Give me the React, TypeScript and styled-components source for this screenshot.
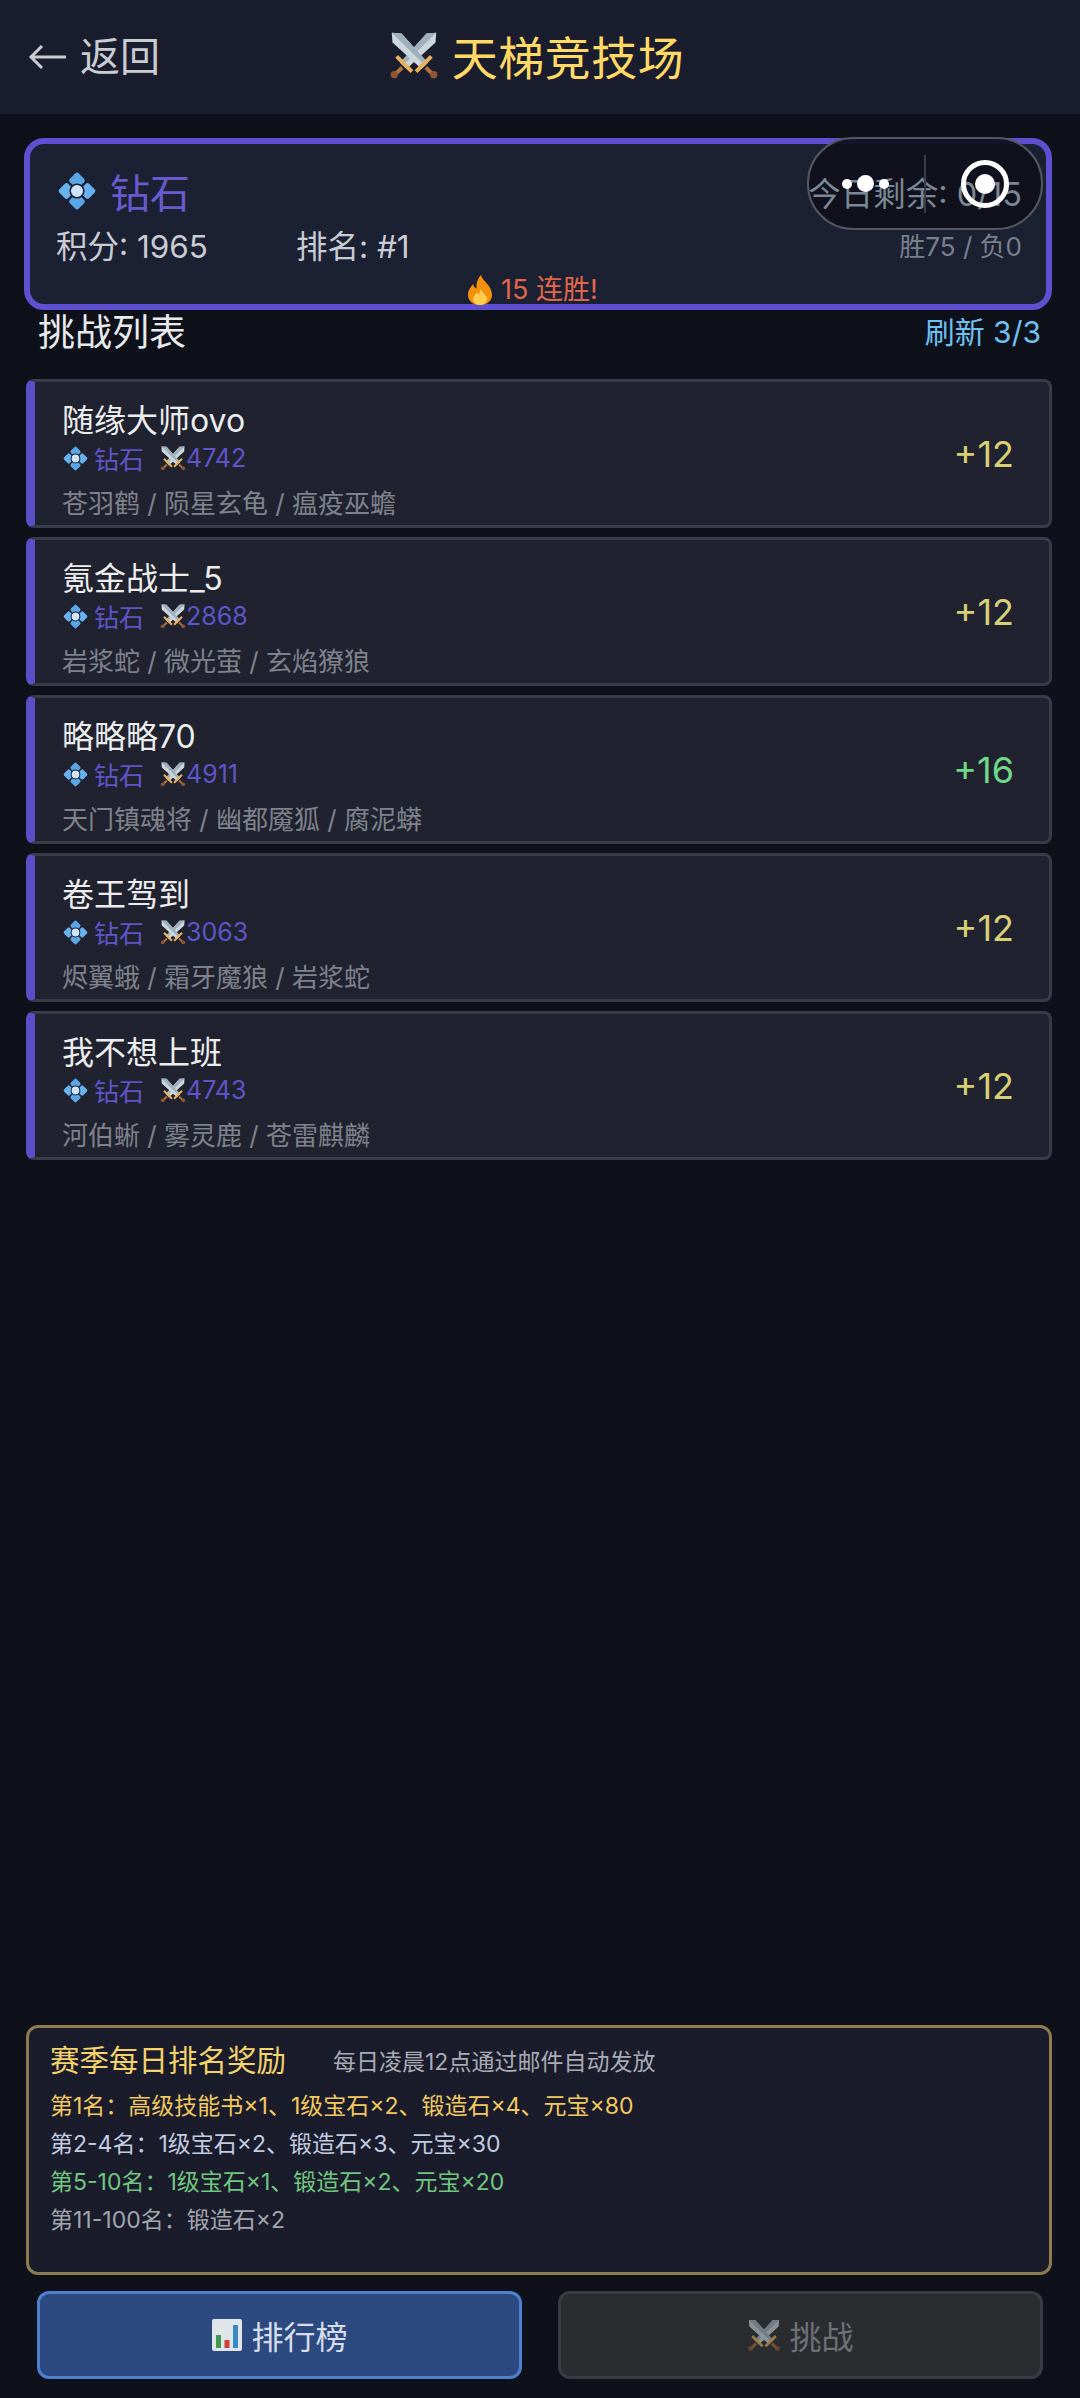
import React from "react";
import styled, { createGlobalStyle } from "styled-components";

const GlobalStyle = createGlobalStyle`
  html, body {
    margin: 0;
    padding: 0;
    background: #0f111a;
  }
  body {
    font-family: Inter, "Noto Sans CJK SC", sans-serif;
  }
`;

interface Opponent {
  name: string;
  power: number;
  pets: string;
  gain: number;
}

const opponents: Opponent[] = [
  { name: "随缘大师ovo", power: 4742, pets: "苍羽鹤 / 陨星玄龟 / 瘟疫巫蟾", gain: 12 },
  { name: "氪金战士_5", power: 2868, pets: "岩浆蛇 / 微光萤 / 玄焰獠狼", gain: 12 },
  { name: "略略略70", power: 4911, pets: "天门镇魂将 / 幽都魇狐 / 腐泥蟒", gain: 16 },
  { name: "卷王驾到", power: 3063, pets: "烬翼蛾 / 霜牙魔狼 / 岩浆蛇", gain: 12 },
  { name: "我不想上班", power: 4743, pets: "河伯蜥 / 雾灵鹿 / 苍雷麒麟", gain: 12 },
];

function Swords({ size }: { size: number }) {
  const half = (
    <>
      <path d="M34 2 L33.500 9 L12.500 28 L8 23.500 L27 2.500 Z" fill="#ccd6dd" />
      <path d="M34 2 L10 25.500 L8 23.500 L27 2.500 Z" fill="#9fb0bd" />
      <path d="M4.500 20 L6.500 18 L17.500 29 L15.500 31 Z" fill="#e8b25c" />
      <path d="M8.500 26 L10.500 28 L5.500 33 L3.500 31 Z" fill="#b0713f" />
      <circle cx="3.800" cy="32.200" r="2.600" fill="#8f5633" />
    </>
  );
  return (
    <svg width={size} height={size} viewBox="0 0 36 36">
      {half}
      <g transform="matrix(-1 0 0 1 36 0)">{half}</g>
    </svg>
  );
}

function Diamond({ size }: { size: number }) {
  return (
    <svg width={size} height={size} viewBox="0 0 40 40">
      <rect x="14" y="4" width="12" height="12" rx="2.500" transform="rotate(45 20 10)" fill="#5aa5e6" />
      <rect x="14" y="24" width="12" height="12" rx="2.500" transform="rotate(45 20 30)" fill="#5aa5e6" />
      <rect x="4" y="14" width="12" height="12" rx="2.500" transform="rotate(45 10 20)" fill="#68b2f0" />
      <rect x="24" y="14" width="12" height="12" rx="2.500" transform="rotate(45 30 20)" fill="#68b2f0" />
      <circle cx="20" cy="20" r="6.500" fill="#cfe4f7" stroke="#1c2033" strokeWidth="1.500" />
    </svg>
  );
}

function Fire() {
  return (
    <svg width="26" height="30" viewBox="0 0 26 30">
      <path
        d="M14 0 C15 6 25 10 25 20 C25 26 20 30 13 30 C6 30 1 26 1 20 C1 15 4 12 6 9 C7 12 8 13 9.500 13.500 C9 8 11 3 14 0 Z"
        fill="#f4900c"
      />
      <path
        d="M14 14 C15 18 20 20 20 24 C20 27.500 17 30 13 30 C9 30 6 27.500 6 24 C6 21 8.500 19.500 10 17.500 C11 19 12 19 12.500 19 C12.500 17 13 15.500 14 14 Z"
        fill="#ffcc4d"
      />
    </svg>
  );
}

function BarChart() {
  return (
    <svg width="32" height="32" viewBox="0 0 32 32">
      <rect x="1" y="0" width="30" height="32" rx="2" fill="#dfe5e8" />
      <rect x="5" y="16" width="5" height="13" fill="#3e9b4f" />
      <rect x="13.500" y="21" width="5" height="8" fill="#d23f3f" />
      <rect x="22" y="6" width="5" height="23" fill="#3b88c3" />
    </svg>
  );
}

export default function App() {
  return (
    <Page>
      <GlobalStyle />
      <Header>
        <BackButton>
          <svg width="38" height="26" viewBox="0 0 38 26" fill="none" stroke="#c9ccd2" strokeWidth="3">
            <path d="M38 13 H3 M14 2 L3 13 L14 24" />
          </svg>
          <span>返回</span>
        </BackButton>
        <Title>
          <Swords size={50} />
          <span>天梯竞技场</span>
        </Title>
      </Header>

      <Main>
        <RankCard>
          <RankRow>
            <RankName>
              <Diamond size={42} />
              <span>钻石</span>
            </RankName>
            <Remaining>今日剩余: 0/15</Remaining>
          </RankRow>
          <StatsRow>
            <Stats>
              <span>积分: 1965</span>
              <span>排名: #1</span>
            </Stats>
            <Record>胜75 / 负0</Record>
          </StatsRow>
          <Streak>
            <Fire />
            <span>15 连胜!</span>
          </Streak>
          <Capsule>
            <Dots>
              <Dot $size={10} />
              <Dot $size={17} />
              <Dot $size={10} />
            </Dots>
            <CapsuleDivider />
            <CapsuleTarget>
              <Dot $size={20} />
            </CapsuleTarget>
          </Capsule>
        </RankCard>

        <SectionHead>
          <SectionTitle>挑战列表</SectionTitle>
          <Refresh>刷新 3/3</Refresh>
        </SectionHead>

        <List>
          {opponents.map((o) => (
            <Row key={o.name}>
              <RowBody>
                <PlayerName>{o.name}</PlayerName>
                <PlayerMeta>
                  <Diamond size={27} />
                  <span>钻石</span>
                  <Power>
                    <Swords size={26} />
                    <span>{o.power}</span>
                  </Power>
                </PlayerMeta>
                <Pets>{o.pets}</Pets>
              </RowBody>
              <Gain $high={o.gain > 12}>+{o.gain}</Gain>
            </Row>
          ))}
        </List>
      </Main>

      <Rewards>
        <RewardsHead>
          <RewardsTitle>赛季每日排名奖励</RewardsTitle>
          <RewardsNote>每日凌晨12点通过邮件自动发放</RewardsNote>
        </RewardsHead>
        <RewardLine $color="#f3c95f">第1名：高级技能书×1、1级宝石×2、锻造石×4、元宝×80</RewardLine>
        <RewardLine $color="#c3cbe0">第2-4名：1级宝石×2、锻造石×3、元宝×30</RewardLine>
        <RewardLine $color="#71c77f">第5-10名：1级宝石×1、锻造石×2、元宝×20</RewardLine>
        <RewardLine $color="#a3a6ad">第11-100名：锻造石×2</RewardLine>
      </Rewards>

      <Footer>
        <RankButton>
          <BarChart />
          <span>排行榜</span>
        </RankButton>
        <ChallengeButton>
          <Swords size={34} />
          <span>挑战</span>
        </ChallengeButton>
      </Footer>
    </Page>
  );
}

const Page = styled.div`
  width: 1080px;
  height: 2398px;
  display: flex;
  flex-direction: column;
  overflow: hidden;
  background: #0f111a;
`;

const Header = styled.header`
  position: relative;
  height: 114px;
  flex: none;
  display: flex;
  align-items: center;
  justify-content: center;
  padding-right: 7px;
  box-sizing: border-box;
  background: #1a1d2d;
`;

const BackButton = styled.div`
  position: absolute;
  left: 28px;
  top: 33px;
  display: flex;
  align-items: center;
  gap: 14px;
  font-size: 40px;
  line-height: 48px;
  color: #c9ccd2;
`;

const Title = styled.h1`
  margin: -4px 0 0;
  display: flex;
  align-items: center;
  gap: 13px;
  font-size: 46px;
  font-weight: 400;
  letter-spacing: 0.5px;
  color: #ffd966;
`;

const Main = styled.main`
  flex: 1;
  display: flex;
  flex-direction: column;
  padding: 24px 28px 0 24px;
`;

const RankCard = styled.section`
  position: relative;
  height: 172px;
  box-sizing: border-box;
  padding: 17px 24px 0 26px;
  border: 6px solid #5e50d0;
  border-radius: 20px;
  background: #1c2033;
`;

const RankRow = styled.div`
  display: flex;
  justify-content: space-between;
  align-items: center;
  height: 60px;
`;

const RankName = styled.div`
  display: flex;
  align-items: center;
  gap: 12px;
  font-size: 40px;
  color: #6a5acd;
`;

const Remaining = styled.div`
  position: relative;
  z-index: 1;
  font-size: 32.500px;
  color: #7a8794;
`;

const StatsRow = styled.div`
  display: flex;
  justify-content: space-between;
  align-items: center;
  height: 46px;
`;

const Stats = styled.div`
  display: flex;
  gap: 88px;
  font-size: 31.500px;
  color: #c9ccd2;
`;

const Record = styled.div`
  font-size: 26px;
  color: #7a7f8c;
`;

const Streak = styled.div`
  position: absolute;
  left: 0;
  right: 11px;
  bottom: -1px;
  display: flex;
  justify-content: center;
  align-items: center;
  gap: 8px;
  font-size: 27px;
  line-height: 30px;
  color: #e2674a;
`;

const Capsule = styled.div`
  position: absolute;
  top: -7px;
  right: 3px;
  width: 236px;
  height: 93px;
  box-sizing: border-box;
  display: flex;
  align-items: center;
  border-radius: 46px;

  &::before {
    content: "";
    position: absolute;
    inset: 0;
    box-sizing: border-box;
    border: 2px solid #55565f;
    border-radius: 46px;
    background: rgba(15, 16, 26, 0.92);
  }
`;

const Dots = styled.div`
  position: relative;
  z-index: 2;
  flex: 1;
  display: flex;
  justify-content: center;
  align-items: center;
  gap: 5px;
`;

const Dot = styled.span<{ $size: number }>`
  width: ${(p) => p.$size}px;
  height: ${(p) => p.$size}px;
  border-radius: 50%;
  background: #fff;
`;

const CapsuleDivider = styled.div`
  position: relative;
  z-index: 2;
  width: 2px;
  height: 58px;
  background: #3a3c48;
`;

const CapsuleTarget = styled.div`
  position: relative;
  z-index: 2;
  flex: 1;
  display: flex;
  justify-content: center;
  align-items: center;

  &::after {
    content: "";
    position: absolute;
    left: 50%;
    top: 50%;
    width: 48px;
    height: 48px;
    box-sizing: border-box;
    transform: translate(-50%, -50%);
    border: 5px solid #fff;
    border-radius: 50%;
  }
`;

const SectionHead = styled.div`
  display: flex;
  justify-content: space-between;
  align-items: center;
  height: 40px;
  padding: 0 11px 0 14px;
  margin-bottom: 29px;
`;

const SectionTitle = styled.h2`
  margin: 0;
  font-size: 37px;
  font-weight: 400;
  color: #e8e9ec;
`;

const Refresh = styled.div`
  font-size: 30px;
  color: #6fc0f2;
`;

const List = styled.div`
  display: flex;
  flex-direction: column;
  gap: 9px;
  margin-left: 2px;
`;

const Row = styled.div`
  height: 149px;
  box-sizing: border-box;
  display: flex;
  align-items: center;
  justify-content: space-between;
  padding: 0 35px 0 27px;
  border: 3px solid #383b48;
  border-left: 9px solid #5b4fc7;
  border-radius: 8px;
  background: #20222f;
`;

const RowBody = styled.div`
  display: flex;
  flex-direction: column;
  padding-top: 14px;
`;

const PlayerName = styled.div`
  font-size: 32px;
  line-height: 42px;
  color: #eceded;
`;

const PlayerMeta = styled.div`
  display: flex;
  align-items: center;
  gap: 5px;
  height: 36px;
  margin-top: -2px;
  font-size: 25px;
  color: #5f55c9;
`;

const Power = styled.div`
  display: flex;
  align-items: center;
  margin-left: 11px;
`;

const Pets = styled.div`
  margin-top: 11px;
  font-size: 26px;
  line-height: 34px;
  color: #7f828c;
`;

const Gain = styled.div<{ $high: boolean }>`
  font-size: 36px;
  color: ${(p) => (p.$high ? "#6fd98a" : "#d8d077")};
`;

const Rewards = styled.section`
  margin: 0 28px 0 26px;
  height: 250px;
  flex: none;
  box-sizing: border-box;
  padding: 7px 21px 0;
  border: 3px solid #8c7c4f;
  border-radius: 12px;
  background: #1a1c2c;
`;

const RewardsHead = styled.div`
  display: flex;
  align-items: center;
  gap: 47px;
  height: 46px;
  margin-bottom: 6px;
`;

const RewardsTitle = styled.div`
  font-size: 29.500px;
  color: #f3d36a;
`;

const RewardsNote = styled.div`
  margin-top: 3px;
  font-size: 23px;
  color: #a9abb4;
`;

const RewardLine = styled.div<{ $color: string }>`
  font-size: 23px;
  line-height: 38px;
  color: ${(p) => p.$color};
`;

const Footer = styled.footer`
  flex: none;
  display: flex;
  justify-content: space-between;
  padding: 16px 37px 19px 37px;
`;

const ActionButton = styled.div`
  width: 485px;
  height: 88px;
  box-sizing: border-box;
  display: flex;
  justify-content: center;
  align-items: center;
  gap: 8px;
  border-radius: 12px;
  font-size: 32px;
`;

const RankButton = styled(ActionButton)`
  border: 3px solid #4f7fd0;
  background: #2c4a80;
  color: #d7deea;
`;

const ChallengeButton = styled(ActionButton)`
  border: 3px solid #3a3c44;
  background: #2b2c30;
  color: #6f7177;

  & > svg {
    opacity: 0.6;
  }
`;
